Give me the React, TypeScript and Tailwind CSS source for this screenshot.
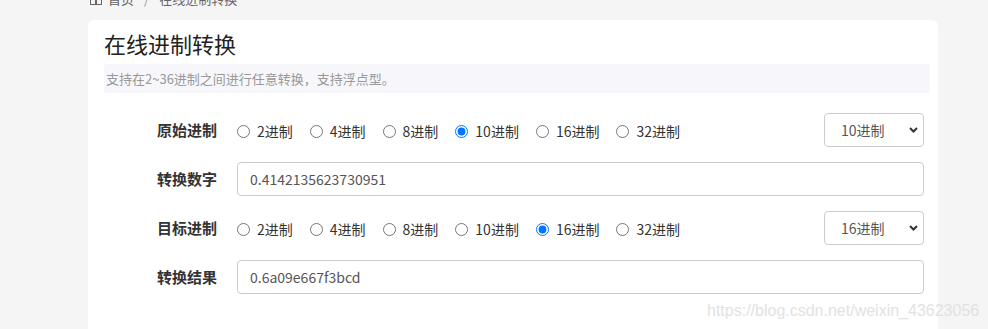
import { useState } from 'react';

const bases = [2, 4, 8, 10, 16, 32];

function BaseRow({
  label,
  name,
  value,
  onChange,
}: {
  label: string;
  name: string;
  value: number;
  onChange: (v: number) => void;
}) {
  return (
    <div className="flex h-[34px] items-center">
      <div className="w-[113px] shrink-0 text-right text-[15px] font-bold text-[#333]">{label}</div>
      <div className="ml-[20px] flex flex-1 items-center pt-[2px]">
        {bases.map((b) => (
          <label key={b} className="mr-[17px] flex items-center text-[14px] text-[#333]">
            <input
              type="radio"
              name={name}
              checked={value === b}
              onChange={() => onChange(b)}
              className="m-0 mr-[7px] h-[13px] w-[13px]"
            />
            {b}进制
          </label>
        ))}
        <div className="relative ml-auto -mt-[2px]">
          <select
            value={value}
            onChange={(e) => onChange(Number(e.target.value))}
            className="h-[34px] w-[100px] appearance-none rounded-[4px] border border-[#ccc] bg-white pl-[16px] text-[14px] text-[#555] outline-none"
          >
            {bases.map((b) => (
              <option key={b} value={b}>
                {b}进制
              </option>
            ))}
          </select>
          <svg
            className="pointer-events-none absolute right-[6px] top-[14px]"
            width="9"
            height="6"
            viewBox="0 0 9 6"
          >
            <polyline points="1,1 4.5,4.5 8,1" fill="none" stroke="#333" strokeWidth="2" />
          </svg>
        </div>
      </div>
    </div>
  );
}

function TextRow({ label, value }: { label: string; value: string }) {
  return (
    <div className="flex h-[34px] items-center">
      <div className="w-[113px] shrink-0 text-right text-[15px] font-bold text-[#333]">{label}</div>
      <input
        readOnly
        value={value}
        className="ml-[20px] h-[34px] flex-1 rounded-[4px] border border-[#ccc] bg-white pl-[12px] text-[14px] text-[#555] outline-none"
      />
    </div>
  );
}

export default function App() {
  const [from, setFrom] = useState(10);
  const [to, setTo] = useState(16);

  return (
    <div
      className="relative min-h-screen overflow-hidden bg-[#f5f5f5] pl-[88px] pr-[50px]"
      style={{ fontFamily: '"Noto Sans CJK SC", "Noto Sans", sans-serif' }}
    >
      <div className="-mt-[11px] mb-[11px] flex h-[20px] items-center pl-[2px] text-[13px] leading-[20px] text-[#666]">
        <svg width="12" height="12" viewBox="0 0 12 12" className="mr-[6px]">
          <rect x="3" y="0.5" width="6" height="5" fill="none" stroke="#666" />
          <rect x="0.5" y="6.5" width="5" height="5" fill="none" stroke="#666" />
          <rect x="6.5" y="6.5" width="5" height="5" fill="none" stroke="#666" />
        </svg>
        首页
        <span className="mx-[10px] text-[#999]">/</span>
        在线进制转换
      </div>

      <div className="min-h-[320px] rounded-[6px] bg-white pb-8 pl-4 pr-2 pt-2">
        <h1 className="text-[22px] font-normal leading-[30px] text-[#222]">在线进制转换</h1>
        <div className="mt-[6px] h-[29px] rounded-[3px] bg-[#f7f7fb] pl-[2px] text-[13px] leading-[29px] text-[#999]">
          支持在2~36进制之间进行任意转换，支持浮点型。
        </div>

        <div className="mt-[20px] flex flex-col gap-[15px] pr-[6px]">
          <BaseRow label="原始进制" name="from" value={from} onChange={setFrom} />
          <TextRow label="转换数字" value="0.4142135623730951" />
          <BaseRow label="目标进制" name="to" value={to} onChange={setTo} />
          <TextRow label="转换结果" value="0.6a09e667f3bcd" />
        </div>
      </div>

      <div
        className="pointer-events-none absolute left-[707px] top-[299px] text-[16px] text-[#e2e2e2]"
        style={{ fontFamily: '"Liberation Sans", Arial, sans-serif' }}
      >
        https://blog.csdn.net/weixin_43623056
      </div>
    </div>
  );
}
